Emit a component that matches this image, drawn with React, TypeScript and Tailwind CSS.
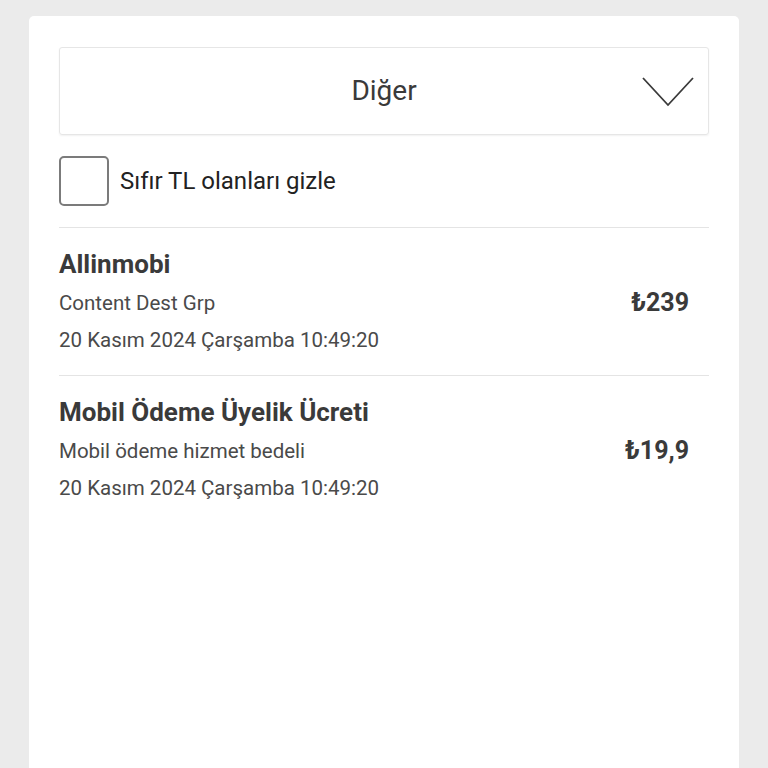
const items = [
  {
    title: "Allinmobi",
    subtitle: "Content Dest Grp",
    date: "20 Kasım 2024 Çarşamba 10:49:20",
    amount: "₺239",
  },
  {
    title: "Mobil Ödeme Üyelik Ücreti",
    subtitle: "Mobil ödeme hizmet bedeli",
    date: "20 Kasım 2024 Çarşamba 10:49:20",
    amount: "₺19,9",
  },
]

function Chevron() {
  return (
    <svg className="w-[52px] h-[30px]" viewBox="0 0 52 30" fill="none" stroke="#3a3a3a" strokeWidth="1.8">
      <path d="M1 1 L26 28 L51 1" />
    </svg>
  )
}

function ChargeRow({ title, subtitle, date, amount }: (typeof items)[number]) {
  return (
    <div className="flex items-center border-t border-[#e4e4e4] pt-[17px] pb-[18px]">
      <div className="flex-1">
        <div className="text-[26px] leading-[38px] font-bold text-[#3a3a3a]">{title}</div>
        <div className="text-[20.5px] leading-[40px] text-[#4a4a4a]">{subtitle}</div>
        <div className="text-[20.5px] leading-[34px] text-[#4a4a4a]">{date}</div>
      </div>
      <div className="pr-[20px] pt-[3px] text-[25px] font-bold text-[#3a3a3a]">{amount}</div>
    </div>
  )
}

export default function App() {
  return (
    <div className="min-h-[768px] bg-[#ebebeb] px-[29px] pt-[16px] font-['Roboto',sans-serif]">
      <div className="min-h-[752px] rounded-t-[5px] bg-white px-[30px] pt-[31px]">
        <div className="flex h-[88px] items-center rounded-[3px] border border-[#e6e6e6] shadow-[0_1px_2px_rgba(0,0,0,0.06)]">
          <div className="flex-1 pl-[66px] text-center text-[28px] text-[#3a3a3a]">Diğer</div>
          <div className="pr-[14px] pt-[2px]">
            <Chevron />
          </div>
        </div>
        <div className="flex items-center gap-[11px] py-[21px]">
          <div className="h-[50px] w-[50px] rounded-[5px] border-2 border-[#7b7b7b]" />
          <span className="text-[24px] text-[#222]">Sıfır TL olanları gizle</span>
        </div>
        {items.map((item) => (
          <ChargeRow key={item.title} {...item} />
        ))}
      </div>
    </div>
  )
}
